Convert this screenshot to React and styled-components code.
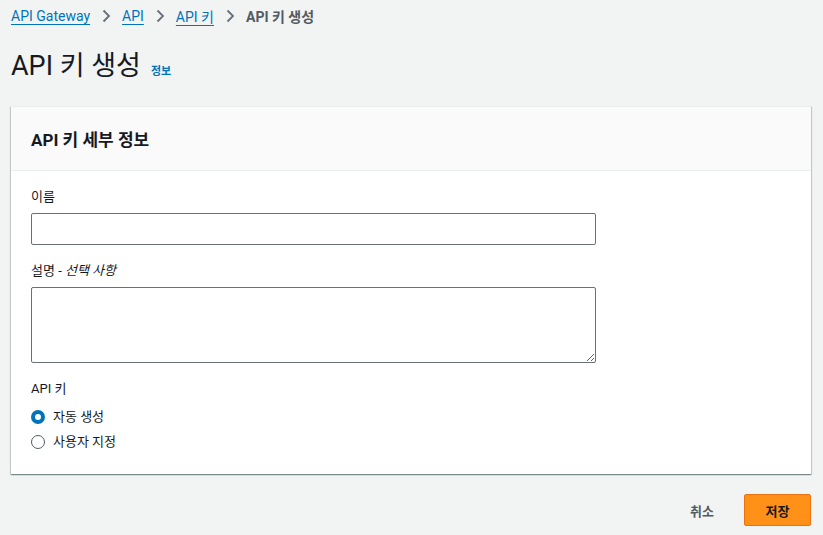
import styled, { createGlobalStyle } from "styled-components";

const GlobalStyle = createGlobalStyle`
  html, body {
    margin: 0;
    padding: 0;
    background: #f2f3f3;
  }
  body {
    font-family: Roboto, "Noto Sans CJK KR", sans-serif;
    color: #16191f;
  }
  * { box-sizing: border-box; }
`;

function Chevron() {
  return (
    <svg width="16" height="16" viewBox="0 0 16 16" fill="none">
      <path d="M5.5 2.5L11 8l-5.5 5.5" stroke="#687078" strokeWidth="1.8" />
    </svg>
  );
}

function Radio({ checked, label }) {
  return (
    <Styled.RadioRow>
      <Styled.RadioDot checked={checked} />
      <span>{label}</span>
    </Styled.RadioRow>
  );
}

export default function App() {
  return (
    <>
      <GlobalStyle />
      <Styled.Page>
        <Styled.Breadcrumbs>
          <Styled.Crumb href="#">API Gateway</Styled.Crumb>
          <Chevron />
          <Styled.Crumb href="#">API</Styled.Crumb>
          <Chevron />
          <Styled.Crumb href="#">API 키</Styled.Crumb>
          <Chevron />
          <Styled.Current>API 키 생성</Styled.Current>
        </Styled.Breadcrumbs>

        <Styled.TitleRow>
          <Styled.Title>API 키 생성</Styled.Title>
          <Styled.Info href="#">정보</Styled.Info>
        </Styled.TitleRow>

        <Styled.Card>
          <Styled.CardHeader>API 키 세부 정보</Styled.CardHeader>
          <Styled.CardBody>
            <Styled.Field>
              <Styled.Label>이름</Styled.Label>
              <Styled.Input type="text" />
            </Styled.Field>
            <Styled.Field>
              <Styled.Label>
                설명 - <em>선택 사항</em>
              </Styled.Label>
              <Styled.TextArea />
            </Styled.Field>
            <Styled.Field>
              <Styled.Label>API 키</Styled.Label>
              <Styled.RadioGroup>
                <Radio checked label="자동 생성" />
                <Radio label="사용자 지정" />
              </Styled.RadioGroup>
            </Styled.Field>
          </Styled.CardBody>
        </Styled.Card>

        <Styled.Actions>
          <Styled.LinkButton>취소</Styled.LinkButton>
          <Styled.PrimaryButton>저장</Styled.PrimaryButton>
        </Styled.Actions>
      </Styled.Page>
    </>
  );
}

const Styled = {
  Page: styled.div`
    padding: 5px 12px 10px 11px;
    width: 823px;
  `,

  Breadcrumbs: styled.nav`
    display: flex;
    align-items: center;
    gap: 8px;
    height: 22px;
    font-size: 14px;
  `,

  Crumb: styled.a`
    color: #0073bb;
    text-decoration: underline;
    text-underline-offset: 3px;
    text-decoration-thickness: 1px;
  `,

  Current: styled.span`
    color: #545b64;
    font-weight: 700;
  `,

  TitleRow: styled.div`
    display: flex;
    align-items: baseline;
    gap: 10px;
    margin-top: 21px;
    height: 58px;
  `,

  Title: styled.h1`
    margin: 0;
    font-size: 27px;
    font-weight: 400;
    line-height: 36px;
    color: #16191f;
  `,

  Info: styled.a`
    font-size: 11px;
    font-weight: 700;
    color: #0073bb;
    text-decoration: none;
  `,

  Card: styled.section`
    background: #fff;
    box-shadow: 0 1px 1px 0 rgba(0, 28, 36, 0.3), 1px 1px 1px 0 rgba(0, 28, 36, 0.15), -1px 1px 1px 0 rgba(0, 28, 36, 0.15);
    border-top: 1px solid #eaeded;
  `,

  CardHeader: styled.h2`
    margin: 0;
    height: 64px;
    display: flex;
    align-items: center;
    padding: 0 20px;
    background: #fafafa;
    border-bottom: 1px solid #eaeded;
    font-size: 17px;
    font-weight: 700;
    color: #16191f;
  `,

  CardBody: styled.div`
    display: flex;
    flex-direction: column;
    gap: 16px;
    padding: 16px 20px 23px;
  `,

  Field: styled.div`
    display: flex;
    flex-direction: column;
    gap: 6px;
  `,

  Label: styled.label`
    font-size: 13px;
    line-height: 20px;
    color: #16191f;
    em { font-style: italic; }
  `,

  Input: styled.input`
    width: 565px;
    height: 32px;
    border: 1px solid #687078;
    border-radius: 2px;
    background: #fff;
  `,

  TextArea: styled.textarea`
    width: 565px;
    height: 76px;
    border: 1px solid #687078;
    border-radius: 2px;
    background: #fff;
    resize: both;
  `,

  RadioGroup: styled.div`
    display: flex;
    flex-direction: column;
    gap: 6px;
    margin-top: 2px;
  `,

  RadioRow: styled.div`
    display: flex;
    align-items: center;
    gap: 8px;
    font-size: 13px;
    line-height: 19px;
  `,

  RadioDot: styled.span`
    width: 14px;
    height: 14px;
    border-radius: 50%;
    background: #fff;
    border: ${(p) => (p.checked ? "4px solid #0073bb" : "1px solid #545b64")};
  `,

  Actions: styled.div`
    display: flex;
    justify-content: flex-end;
    align-items: center;
    gap: 30px;
    margin-top: 20px;
  `,

  LinkButton: styled.button`
    border: none;
    background: none;
    font-family: inherit;
    font-size: 13px;
    font-weight: 700;
    color: #545b64;
    padding: 0;
  `,

  PrimaryButton: styled.button`
    width: 67px;
    height: 32px;
    border: 1px solid #ec7211;
    border-radius: 2px;
    background: #ff9018;
    font-family: inherit;
    font-size: 13px;
    font-weight: 700;
    color: #16191f;
  `,
};
